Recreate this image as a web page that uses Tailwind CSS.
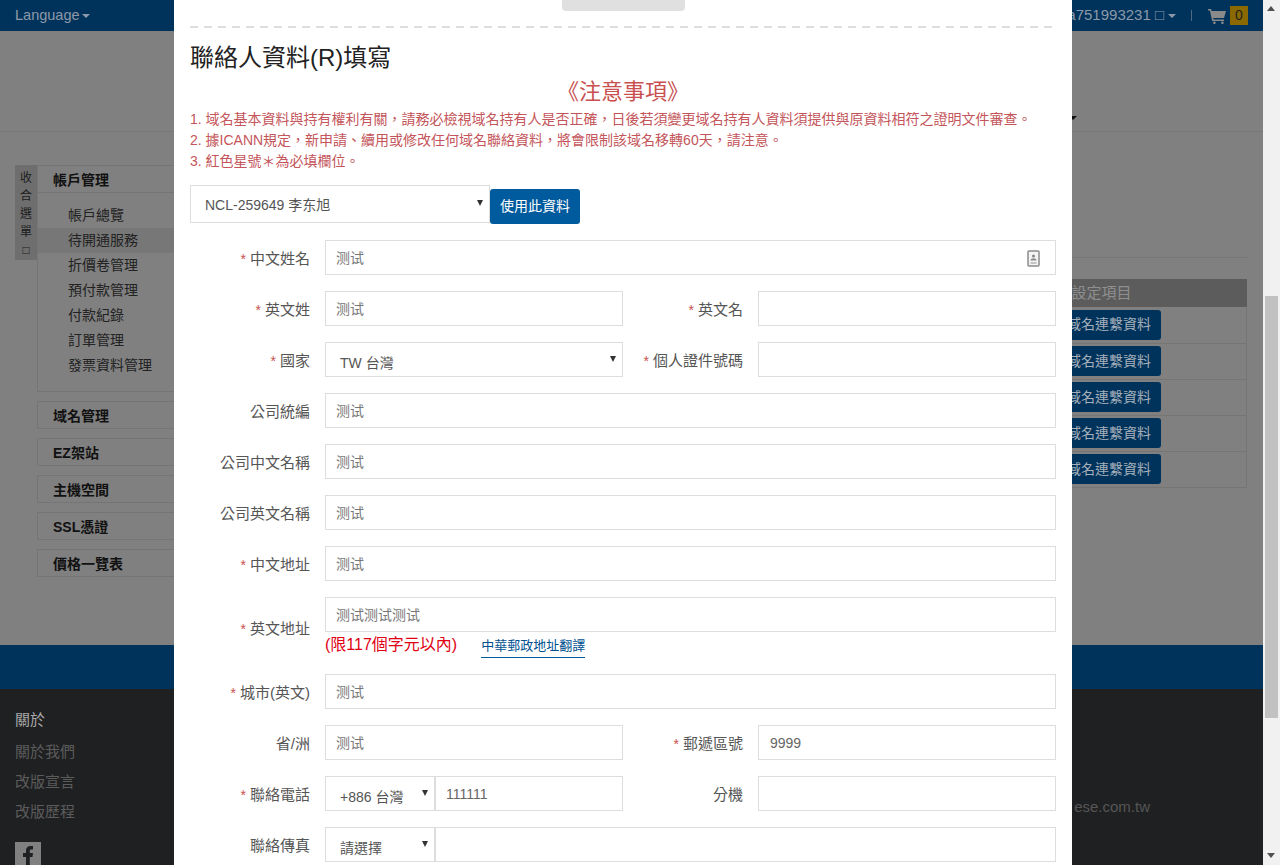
<!DOCTYPE html>
<html lang="zh-Hant">
<head>
    <meta charset="UTF-8">
    <meta name="viewport" content="width=device-width, initial-scale=1.0">
    <title>聯絡人資料填寫</title>
    <script src="https://cdn.jsdelivr.net/npm/@tailwindcss/browser@4"></script>
</head>
<body class="[font-family:'Liberation_Sans','Noto_Sans_CJK_TC',sans-serif] overflow-hidden">
<div class="relative w-[1280px] h-[865px] overflow-hidden flex bg-[#808080]">

    <!-- Page behind the dialog, already dimmed -->
    <div class="w-[1263px] h-[865px] flex flex-col shrink-0">
        <header class="h-[31px] bg-[#00335c] flex items-center justify-between pl-[15px] pr-[15px] text-[15px] text-[#8c99a8]">
            <div class="flex items-center gap-[1px] text-[14.500px]">Language <span class="ml-[1px] w-0 h-0 border-x-[4px] border-x-transparent border-t-[4px] border-t-[#8c99a8]"></span></div>
            <div class="flex items-center">
                <span>a751993231 □</span>
                <span class="ml-[4px] w-0 h-0 border-x-[4px] border-x-transparent border-t-[4px] border-t-[#8c99a8]"></span>
                <span class="ml-[15px] w-px h-[11px] bg-[#4d6a85]"></span>
                <svg class="ml-[16px]" width="18" height="16" viewBox="0 0 18 16"><path fill="#8a8a8a" d="M0 1h3l.6 2H18l-2 7H5.200l.4 1.500H16V13H4.200L1.900 2.500H0zM6 13.500a1.300 1.300 0 1 1 0 2.500 1.300 1.300 0 0 1 0-2.500zm8 0a1.300 1.300 0 1 1 0 2.500 1.300 1.300 0 0 1 0-2.500z"/></svg>
                <span class="ml-[4px] w-[18px] h-[19px] bg-[#8a6a00] text-[#222] text-[14px] flex items-center justify-center">0</span>
            </div>
        </header>
        <div class="h-[101px] border-b border-[#787878] flex justify-end pr-[186px] pt-[85px]">
            <span class="w-0 h-0 border-x-[4px] border-x-transparent border-t-[4px] border-t-[#111]"></span>
        </div>
        <main class="h-[513px] flex justify-between">
            <div class="flex items-start pl-[15px] pt-[33px]">
                <div class="w-[22px] h-[95px] bg-[#6e6e6e] flex flex-col items-center text-[12px] leading-[18px] text-[#1c1c1c] pt-[4px]">
                    <span>收</span><span>合</span><span>選</span><span>單</span><span>□</span>
                </div>
                <nav class="w-[150px] flex flex-col gap-[9px] text-[14px] text-[#111]">
                    <div class="border border-[#757575] h-[227px]">
                        <div class="h-[27px] border-b border-[#757575] pl-[15px] pt-[2px] font-bold flex items-center">帳戶管理</div>
                        <ul class="pt-[10px] text-[#222]">
                            <li class="h-[25px] pl-[30px] flex items-center">帳戶總覽</li>
                            <li class="h-[25px] pl-[30px] flex items-center bg-[#777777]">待開通服務</li>
                            <li class="h-[25px] pl-[30px] flex items-center">折價卷管理</li>
                            <li class="h-[25px] pl-[30px] flex items-center">預付款管理</li>
                            <li class="h-[25px] pl-[30px] flex items-center">付款紀錄</li>
                            <li class="h-[25px] pl-[30px] flex items-center">訂單管理</li>
                            <li class="h-[25px] pl-[30px] flex items-center">發票資料管理</li>
                        </ul>
                    </div>
                    <div class="h-[28px] border border-[#757575] pl-[15px] pt-[2px] font-bold flex items-center">域名管理</div>
                    <div class="h-[28px] border border-[#757575] pl-[15px] pt-[2px] font-bold flex items-center">EZ架站</div>
                    <div class="h-[28px] border border-[#757575] pl-[15px] pt-[2px] font-bold flex items-center">主機空間</div>
                    <div class="h-[28px] border border-[#757575] pl-[15px] pt-[2px] font-bold flex items-center">SSL憑證</div>
                    <div class="h-[28px] border border-[#757575] pl-[15px] pt-[2px] font-bold flex items-center">價格一覽表</div>
                </nav>
            </div>
            <div class="w-[190px] mr-[16px] mt-[125px]">
                <div class="border-t border-dotted border-[#6e6e6e]"></div>
                <table class="mt-[21px] w-full text-[14px] border-collapse">
                    <thead>
                        <tr class="h-[28px] bg-[#5c5c5c] text-[#8f8f8f] text-[15px]"><th class="font-normal text-left pl-[14px]">設定項目</th></tr>
                    </thead>
                    <tbody class="border-x border-b border-[#757575]">
                        <tr class="h-[36px] border-b border-[#757575]"><td class="pl-[3px]"><a class="inline-flex items-center justify-end w-[100px] h-[30px] pr-[10px] bg-[#00335c] rounded-[3px] text-[#a6b0ba]">域名連繫資料</a></td></tr>
                        <tr class="h-[36px] border-b border-[#757575]"><td class="pl-[3px]"><a class="inline-flex items-center justify-end w-[100px] h-[30px] pr-[10px] bg-[#00335c] rounded-[3px] text-[#a6b0ba]">域名連繫資料</a></td></tr>
                        <tr class="h-[36px] border-b border-[#757575]"><td class="pl-[3px]"><a class="inline-flex items-center justify-end w-[100px] h-[30px] pr-[10px] bg-[#00335c] rounded-[3px] text-[#a6b0ba]">域名連繫資料</a></td></tr>
                        <tr class="h-[36px] border-b border-[#757575]"><td class="pl-[3px]"><a class="inline-flex items-center justify-end w-[100px] h-[30px] pr-[10px] bg-[#00335c] rounded-[3px] text-[#a6b0ba]">域名連繫資料</a></td></tr>
                        <tr class="h-[36px]"><td class="pl-[3px]"><a class="inline-flex items-center justify-end w-[100px] h-[30px] pr-[10px] bg-[#00335c] rounded-[3px] text-[#a6b0ba]">域名連繫資料</a></td></tr>
                    </tbody>
                </table>
            </div>
        </main>
        <div class="h-[44px] bg-[#00335c]"></div>
        <footer class="flex-1 bg-[#1f2022] flex justify-between pl-[15px] pr-[113px] text-[15px] overflow-hidden">
            <div class="pt-[20px]">
                <div class="h-[22px] leading-[22px] text-[#a8a8a8]">關於</div>
                <ul class="mt-[6px] text-[#5c5c5c]">
                    <li class="h-[30px] leading-[30px]">關於我們</li>
                    <li class="h-[30px] leading-[30px]">改版宣言</li>
                    <li class="h-[30px] leading-[30px]">改版歷程</li>
                </ul>
                <div class="mt-[15px] w-[26px] h-[26px] bg-[#808080] flex items-end justify-center overflow-hidden">
                    <svg width="14" height="24" viewBox="0 0 14 24"><path fill="#1f2022" d="M5 24V13H2V9h3V6.500C5 3.500 6.800 2 9.500 2c1.200 0 2.300.1 2.500.1v3.400H10.300C9 5.500 8.800 6.200 8.800 7.100V9h3.200l-.5 4H8.800v11z"/></svg>
                </div>
            </div>
            <div class="pt-[107px] text-[#565656]">ese.com.tw</div>
        </footer>
    </div>

    <!-- Scrollbar -->
    <div class="relative w-[17px] h-[865px] bg-[#f1f1f1] shrink-0">
        <span class="absolute left-[4px] top-[6px] w-0 h-0 border-x-[4.5px] border-x-transparent border-b-[5px] border-b-[#505050]"></span>
        <span class="absolute left-[2px] top-[296px] w-[13px] h-[422px] bg-[#c1c1c1]"></span>
        <span class="absolute left-[4px] top-[853px] w-0 h-0 border-x-[4.5px] border-x-transparent border-t-[5px] border-t-[#505050]"></span>
    </div>

    <!-- Dialog -->
    <div class="absolute left-[174px] top-0 w-[898px] h-[865px] bg-white px-[16px] overflow-hidden text-[14px] text-[#555]">
        <div class="ml-[372px] w-[123px] h-[11px] bg-[#e0e0e0] rounded-b-[4px]"></div>
        <div class="mt-[15px] h-[2px] bg-[repeating-linear-gradient(90deg,#dedede_0,#dedede_8px,transparent_8px,transparent_14px)]"></div>
        <h2 class="mt-[12px] h-[36px] leading-[36px] text-[24px] text-[#222]">聯絡人資料(R)填寫</h2>
        <div class="mt-[1px] h-[30px] leading-[30px] text-center text-[22px] text-[#c9504f]">《注意事項》</div>
        <ol class="mt-[2px] text-[14px] leading-[21px] text-[#c4555a]">
            <li>1. 域名基本資料與持有權利有關，請務必檢視域名持有人是否正確，日後若須變更域名持有人資料須提供與原資料相符之證明文件審查。</li>
            <li>2. 據ICANN規定，新申請、續用或修改任何域名聯絡資料，將會限制該域名移轉60天，請注意。</li>
            <li>3. 紅色星號＊為必填欄位。</li>
        </ol>

        <div class="mt-[13px] flex items-start">
            <div class="relative w-[300px] h-[38px]">
                <select class="w-full h-full appearance-none border border-[#dddddd] bg-white pl-[14px] pt-[2px] text-[14px] text-[#555] outline-none"><option>NCL-259649 李东旭</option></select>
                <span class="absolute right-[7px] top-[15px] w-0 h-0 border-x-[3.5px] border-x-transparent border-t-[6px] border-t-[#333]"></span>
            </div>
            <button class="mt-[4px] w-[90px] h-[35px] bg-[#005a9e] rounded-[3px] text-white text-[14px]">使用此資料</button>
        </div>

        <form class="mt-[16px] flex flex-col gap-[16px]">
            <div class="flex items-center">
                <label class="w-[120px] pt-[4px] text-right text-[15px]"><span class="text-[#c9504f] text-[14px]">*</span> 中文姓名</label>
                <div class="relative ml-[15px] flex-1 h-[35px]">
                    <input value="测试" class="w-full h-full border border-[#dddddd] pl-[10px] pb-[2px] text-[#777] outline-none">
                    <svg class="absolute right-[16px] top-[10px]" width="13" height="17" viewBox="0 0 13 17"><rect x="1" y="1" width="11" height="15" rx="1" fill="#f4f4f4" stroke="#8a8a8a" stroke-width="1.500"/><circle cx="6.500" cy="6" r="1.600" fill="#8a8a8a"/><path fill="#8a8a8a" d="M3.500 10.500c0-1.500 1.300-2.300 3-2.300s3 .8 3 2.300z"/><rect x="3.500" y="12" width="6" height="2" fill="#c4c4c4"/></svg>
                </div>
            </div>
            <div class="flex items-center">
                <label class="w-[120px] pt-[4px] text-right text-[15px]"><span class="text-[#c9504f] text-[14px]">*</span> 英文姓</label>
                <input value="测试" class="ml-[15px] w-[298px] h-[35px] border border-[#dddddd] pl-[10px] pb-[2px] text-[#777] outline-none">
                <label class="w-[120px] pt-[4px] text-right text-[15px]"><span class="text-[#c9504f] text-[14px]">*</span> 英文名</label>
                <input class="ml-[15px] flex-1 h-[35px] border border-[#dddddd] pl-[10px] pb-[2px] text-[#777] outline-none">
            </div>
            <div class="flex items-center">
                <label class="w-[120px] pt-[4px] text-right text-[15px]"><span class="text-[#c9504f] text-[14px]">*</span> 國家</label>
                <div class="relative ml-[15px] w-[298px] h-[35px]">
                    <select class="w-full h-full appearance-none border border-[#dddddd] bg-white pl-[14px] pt-[8px] text-[14px] text-[#555] outline-none"><option>TW 台灣</option></select>
                    <span class="absolute right-[7px] top-[14px] w-0 h-0 border-x-[3.5px] border-x-transparent border-t-[6px] border-t-[#333]"></span>
                </div>
                <label class="w-[120px] pt-[4px] text-right text-[15px]"><span class="text-[#c9504f] text-[14px]">*</span> 個人證件號碼</label>
                <input class="ml-[15px] flex-1 h-[35px] border border-[#dddddd] pl-[10px] pb-[2px] text-[#777] outline-none">
            </div>
            <div class="flex items-center">
                <label class="w-[120px] pt-[4px] text-right text-[15px]">公司統編</label>
                <input value="测试" class="ml-[15px] flex-1 h-[35px] border border-[#dddddd] pl-[10px] pb-[2px] text-[#777] outline-none">
            </div>
            <div class="flex items-center">
                <label class="w-[120px] pt-[4px] text-right text-[15px]">公司中文名稱</label>
                <input value="测试" class="ml-[15px] flex-1 h-[35px] border border-[#dddddd] pl-[10px] pb-[2px] text-[#777] outline-none">
            </div>
            <div class="flex items-center">
                <label class="w-[120px] pt-[4px] text-right text-[15px]">公司英文名稱</label>
                <input value="测试" class="ml-[15px] flex-1 h-[35px] border border-[#dddddd] pl-[10px] pb-[2px] text-[#777] outline-none">
            </div>
            <div class="flex items-center">
                <label class="w-[120px] pt-[4px] text-right text-[15px]"><span class="text-[#c9504f] text-[14px]">*</span> 中文地址</label>
                <input value="测试" class="ml-[15px] flex-1 h-[35px] border border-[#dddddd] pl-[10px] pb-[2px] text-[#777] outline-none">
            </div>
            <div class="flex items-center">
                <label class="w-[120px] pt-[4px] text-right text-[15px]"><span class="text-[#c9504f] text-[14px]">*</span> 英文地址</label>
                <div class="ml-[15px] flex-1">
                    <input value="测试测试测试" class="w-full h-[35px] border border-[#dddddd] pl-[10px] pb-[2px] text-[#777] outline-none">
                    <div class="h-[26px] flex items-start">
                        <span class="mt-[3px] text-[16px] leading-[20px] text-[#e00012]">(限117個字元以內)</span>
                        <a class="ml-[24px] mt-[5px] h-[21px] leading-[18px] border-b border-[#005a9e] text-[13px] text-[#00508f]">中華郵政地址翻譯</a>
                    </div>
                </div>
            </div>
            <div class="flex items-center">
                <label class="w-[120px] pt-[4px] text-right text-[15px]"><span class="text-[#c9504f] text-[14px]">*</span> 城市(英文)</label>
                <input value="测试" class="ml-[15px] flex-1 h-[35px] border border-[#dddddd] pl-[10px] pb-[2px] text-[#777] outline-none">
            </div>
            <div class="flex items-center">
                <label class="w-[120px] pt-[4px] text-right text-[15px]">省/洲</label>
                <input value="测试" class="ml-[15px] w-[298px] h-[35px] border border-[#dddddd] pl-[10px] pb-[2px] text-[#777] outline-none">
                <label class="w-[120px] pt-[4px] text-right text-[15px]"><span class="text-[#c9504f] text-[14px]">*</span> 郵遞區號</label>
                <input value="9999" class="ml-[15px] flex-1 h-[35px] border border-[#dddddd] pl-[11px] text-[#666] outline-none">
            </div>
            <div class="flex items-center">
                <label class="w-[120px] pt-[4px] text-right text-[15px]"><span class="text-[#c9504f] text-[14px]">*</span> 聯絡電話</label>
                <div class="relative ml-[15px] w-[110px] h-[35px]">
                    <select class="w-full h-full appearance-none border border-[#dddddd] bg-white pl-[14px] pt-[8px] text-[14px] text-[#555] outline-none"><option>+886 台灣</option></select>
                    <span class="absolute right-[7px] top-[14px] w-0 h-0 border-x-[3.5px] border-x-transparent border-t-[6px] border-t-[#333]"></span>
                </div>
                <input value="111111" class="w-[188px] h-[35px] border border-[#dddddd] pl-[10px] text-[#666] outline-none">
                <label class="w-[120px] pt-[4px] text-right text-[15px]">分機</label>
                <input class="ml-[15px] flex-1 h-[35px] border border-[#dddddd] pl-[11px] text-[#777] outline-none">
            </div>
            <div class="flex items-center">
                <label class="w-[120px] pt-[4px] text-right text-[15px]">聯絡傳真</label>
                <div class="relative ml-[15px] w-[110px] h-[35px]">
                    <select class="w-full h-full appearance-none border border-[#dddddd] bg-white pl-[14px] pt-[8px] text-[14px] text-[#555] outline-none"><option>請選擇</option></select>
                    <span class="absolute right-[7px] top-[14px] w-0 h-0 border-x-[3.5px] border-x-transparent border-t-[6px] border-t-[#333]"></span>
                </div>
                <input class="flex-1 h-[35px] border border-[#dddddd] pl-[11px] text-[#666] outline-none">
            </div>
        </form>
    </div>
</div>
</body>
</html>
